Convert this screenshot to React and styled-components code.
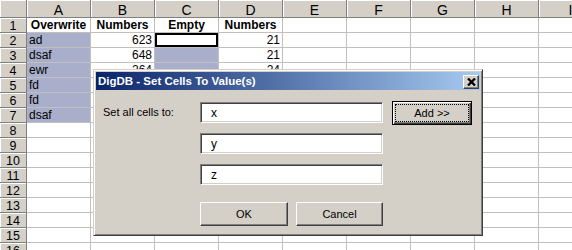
import React from 'react';
import styled, { createGlobalStyle } from 'styled-components';

const GlobalStyle = createGlobalStyle`
  html, body {
    margin: 0;
    padding: 0;
    background: #fff;
    overflow: hidden;
  }

  body {
    font-family: 'Liberation Sans', Arial, sans-serif;
  }
`;

const Screen = styled.div`
  position: relative;
  width: 572px;
  height: 250px;
  overflow: hidden;
`;

const Sheet = styled.div`
  display: grid;
  grid-template-columns: 27px repeat(9, 64px);
  grid-template-rows: 18px;
  grid-auto-rows: 15px;
  width: max-content;
`;

const Header = styled.div`
  box-sizing: border-box;
  display: flex;
  align-items: center;
  justify-content: center;
  padding-top: ${(p) => (p.$row ? 1 : 2)}px;

  background: #d4d0c8;
  border-right: 1px solid #808080;
  border-bottom: 1px solid #808080;
  box-shadow: inset 1px 1px 0 #fff;

  font-size: ${(p) => (p.$row ? 12.5 : 14)}px;
  color: #000;
`;

const Cell = styled.div`
  box-sizing: border-box;
  padding: 0 2px;

  background: ${(p) => (p.$selected ? '#a9afcb' : '#fff')};
  border-right: 1px solid #c0c0c0;
  border-bottom: 1px solid #c0c0c0;
  box-shadow: ${(p) => (p.$active ? 'inset 0 0 0 2px #000' : 'none')};

  font-size: 12px;
  font-weight: ${(p) => (p.$bold ? 700 : 400)};
  line-height: 15px;
  text-align: ${(p) => p.$align || 'left'};
  white-space: nowrap;
  overflow: hidden;
`;

/* dialog (floats over the sheet) */

const Dialog = styled.div`
  position: absolute;
  left: 93px;
  top: 69px;
  width: 390px;
  height: 167px;
  box-sizing: border-box;
  padding: 2px;

  display: flex;
  flex-direction: column;

  background: #d4d0c8;
  border: 1px solid;
  border-color: #d4d0c8 #404040 #404040 #d4d0c8;
  box-shadow: inset 1px 1px 0 #fff, inset -1px -1px 0 #808080;

  font-size: 11px;
  color: #000;
`;

const TitleBar = styled.div`
  height: 18px;
  display: flex;
  align-items: center;
  justify-content: space-between;
  padding: 0 1px 0 2px;

  background: linear-gradient(to right, #0a246a, #a6caf0);
  color: #fff;
  font-size: 11.5px;
  font-weight: 700;
`;

const CloseButton = styled.div`
  box-sizing: border-box;
  width: 16px;
  height: 14px;
  margin-top: 2px;
  display: flex;
  align-items: center;
  justify-content: center;

  background: #d4d0c8;
  border: 1px solid;
  border-color: #fff #404040 #404040 #fff;
  box-shadow: inset -1px -1px 0 #808080;
`;

const Body = styled.div`
  display: flex;
  align-items: flex-start;
  padding: 12px 0 0 7px;
`;

const Label = styled.div`
  width: 97px;
  line-height: 21px;
`;

const Form = styled.div`
  width: 183px;
  display: flex;
  flex-direction: column;
  gap: 10px;
`;

const Field = styled.input`
  box-sizing: border-box;
  width: 100%;
  height: 21px;
  margin: 0;
  padding: 0 0 0 10px;

  background: #fff;
  border: 1px solid;
  border-color: #808080 #fff #fff #808080;
  box-shadow: inset 1px 1px 0 #404040, inset -1px -1px 0 #d4d0c8;
  outline: none;

  font: 12px 'Liberation Sans', Arial, sans-serif;
  color: #000;
`;

const ButtonRow = styled.div`
  display: flex;
  gap: 8px;
  margin-top: 7px;
`;

const Button = styled.button`
  box-sizing: border-box;
  width: ${(p) => p.$w}px;
  height: 24px;
  margin: ${(p) => (p.$side ? '-1px 0 0 9px' : '0')};
  padding: ${(p) => (p.$focus ? '2px' : '0')};

  background: #d4d0c8;
  border: 1px solid;
  border-color: ${(p) => (p.$focus ? '#000' : '#fff #404040 #404040 #fff')};
  box-shadow: ${(p) =>
    p.$focus
      ? 'inset 1px 1px 0 #fff, inset -1px -1px 0 #404040, inset -2px -2px 0 #808080'
      : 'inset -1px -1px 0 #808080'};

  font: 11px 'Liberation Sans', Arial, sans-serif;
  color: #000;
`;

const FocusRing = styled.span`
  box-sizing: border-box;
  display: flex;
  align-items: center;
  justify-content: center;
  height: 100%;
  border: 1px dotted #000;
`;

const columns = ['A', 'B', 'C', 'D', 'E', 'F', 'G', 'H', 'I'];

const data = [
  [['Overwrite', 'center', true], ['Numbers', 'center', true], ['Empty', 'center', true], ['Numbers', 'center', true]],
  [['ad'], ['623', 'right'], [''], ['21', 'right']],
  [['dsaf'], ['648', 'right'], [''], ['21', 'right']],
  [['ewr'], ['264', 'right'], [''], ['24', 'right']],
  [['fd']],
  [['fd']],
  [['dsaf']],
];

const isSelected = (row, col) => row >= 2 && row <= 7 && (col === 0 || col === 2);

const CloseIcon = () => (
  <svg width="9" height="8" viewBox="0 0 9 8">
    <path d="M1 0.5 L8 7.5 M8 0.5 L1 7.5" stroke="#000" strokeWidth="2.3" />
  </svg>
);

const App = () => (
  <Screen>
    <GlobalStyle />
    <Sheet>
      <Header />
      {columns.map((c) => (
        <Header key={c}>{c}</Header>
      ))}
      {Array.from({ length: 16 }, (_, i) => {
        const row = i + 1;
        const values = data[i] || [];
        return (
          <React.Fragment key={row}>
            <Header $row>{row}</Header>
            {columns.map((c, col) => {
              const [text = '', align, bold] = values[col] || [];
              const active = row === 2 && col === 2;
              return (
                <Cell
                  key={c}
                  $align={align}
                  $bold={bold}
                  $active={active}
                  $selected={isSelected(row, col) && !active}
                >
                  {text}
                </Cell>
              );
            })}
          </React.Fragment>
        );
      })}
    </Sheet>

    <Dialog>
      <TitleBar>
        <span>DigDB - Set Cells To Value(s)</span>
        <CloseButton>
          <CloseIcon />
        </CloseButton>
      </TitleBar>
      <Body>
        <Label>Set all cells to:</Label>
        <Form>
          <Field defaultValue="x" readOnly />
          <Field defaultValue="y" readOnly />
          <Field defaultValue="z" readOnly />
          <ButtonRow>
            <Button $w={88}>OK</Button>
            <Button $w={87}>Cancel</Button>
          </ButtonRow>
        </Form>
        <Button $w={80} $side $focus>
          <FocusRing>Add &gt;&gt;</FocusRing>
        </Button>
      </Body>
    </Dialog>
  </Screen>
);

export default App;
